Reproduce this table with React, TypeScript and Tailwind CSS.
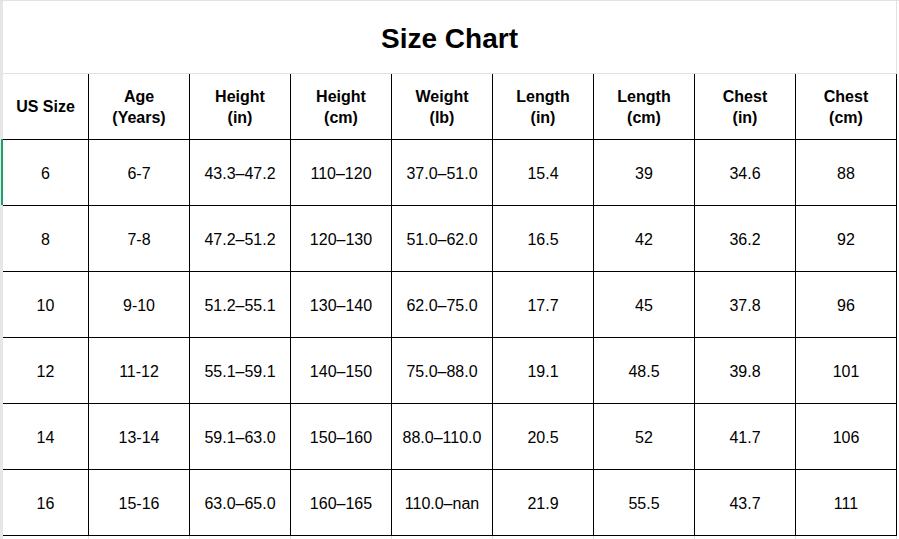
import React from "react";

const headers: string[][] = [
  ["US Size"],
  ["Age", "(Years)"],
  ["Height", "(in)"],
  ["Height", "(cm)"],
  ["Weight", "(lb)"],
  ["Length", "(in)"],
  ["Length", "(cm)"],
  ["Chest", "(in)"],
  ["Chest", "(cm)"],
];

const rows: string[][] = [
  ["6", "6-7", "43.3–47.2", "110–120", "37.0–51.0", "15.4", "39", "34.6", "88"],
  ["8", "7-8", "47.2–51.2", "120–130", "51.0–62.0", "16.5", "42", "36.2", "92"],
  ["10", "9-10", "51.2–55.1", "130–140", "62.0–75.0", "17.7", "45", "37.8", "96"],
  ["12", "11-12", "55.1–59.1", "140–150", "75.0–88.0", "19.1", "48.5", "39.8", "101"],
  ["14", "13-14", "59.1–63.0", "150–160", "88.0–110.0", "20.5", "52", "41.7", "106"],
  ["16", "15-16", "63.0–65.0", "160–165", "110.0–nan", "21.9", "55.5", "43.7", "111"],
];

const font = { fontFamily: '"Liberation Sans", Arial, sans-serif' };

function Cell({ i, children, bold }: { i: number; children: React.ReactNode; bold?: boolean }) {
  return (
    <div
      className={`${i === 0 ? "w-[86px]" : "w-[101px]"} h-[66px] shrink-0 border-r border-b border-black flex flex-col items-center justify-center text-center text-[16px] leading-[21px] text-black ${bold ? "font-bold" : "pt-[2px]"}`}
    >
      {children}
    </div>
  );
}

export default function App() {
  return (
    <div className="w-[899px] h-[539px] bg-white flex flex-col overflow-hidden" style={font}>
      <div className="h-px w-full bg-[#e2e2e2] shrink-0" />
      <div className="flex flex-1">
        {/* left gutter */}
        <div className="w-[3px] flex flex-col shrink-0">
          <div className="h-[138px] bg-[#e6e6e6]" />
          <div className="h-[66px] flex">
            <div className="w-px bg-[#e6e6e6]" />
            <div className="w-[2px] bg-[#1e9e6a]" />
          </div>
          <div className="flex-1 bg-[#e6e6e6]" />
        </div>
        {/* main */}
        <div className="w-[894px] flex flex-col shrink-0">
          <div className="h-[73px] pt-[4px] border-b border-r border-[#e2e2e2] flex items-center justify-center shrink-0">
            <span className="text-[28px] font-bold text-black leading-none">Size Chart</span>
          </div>
          <div className="flex">
            {headers.map((h, i) => (
              <Cell key={i} i={i} bold>
                {h.map((l, j) => (
                  <span key={j}>{l}</span>
                ))}
              </Cell>
            ))}
          </div>
          {rows.map((r, ri) => (
            <div className="flex" key={ri}>
              {r.map((v, i) => (
                <Cell key={i} i={i}>
                  {v}
                </Cell>
              ))}
            </div>
          ))}
          <div className="flex flex-1">
            {headers.map((_, i) => (
              <div
                key={i}
                className={`${i === 0 ? "w-[86px]" : "w-[101px]"} shrink-0 border-r border-[#e2e2e2]`}
              />
            ))}
          </div>
        </div>
        <div className="flex-1" />
      </div>
    </div>
  );
}
